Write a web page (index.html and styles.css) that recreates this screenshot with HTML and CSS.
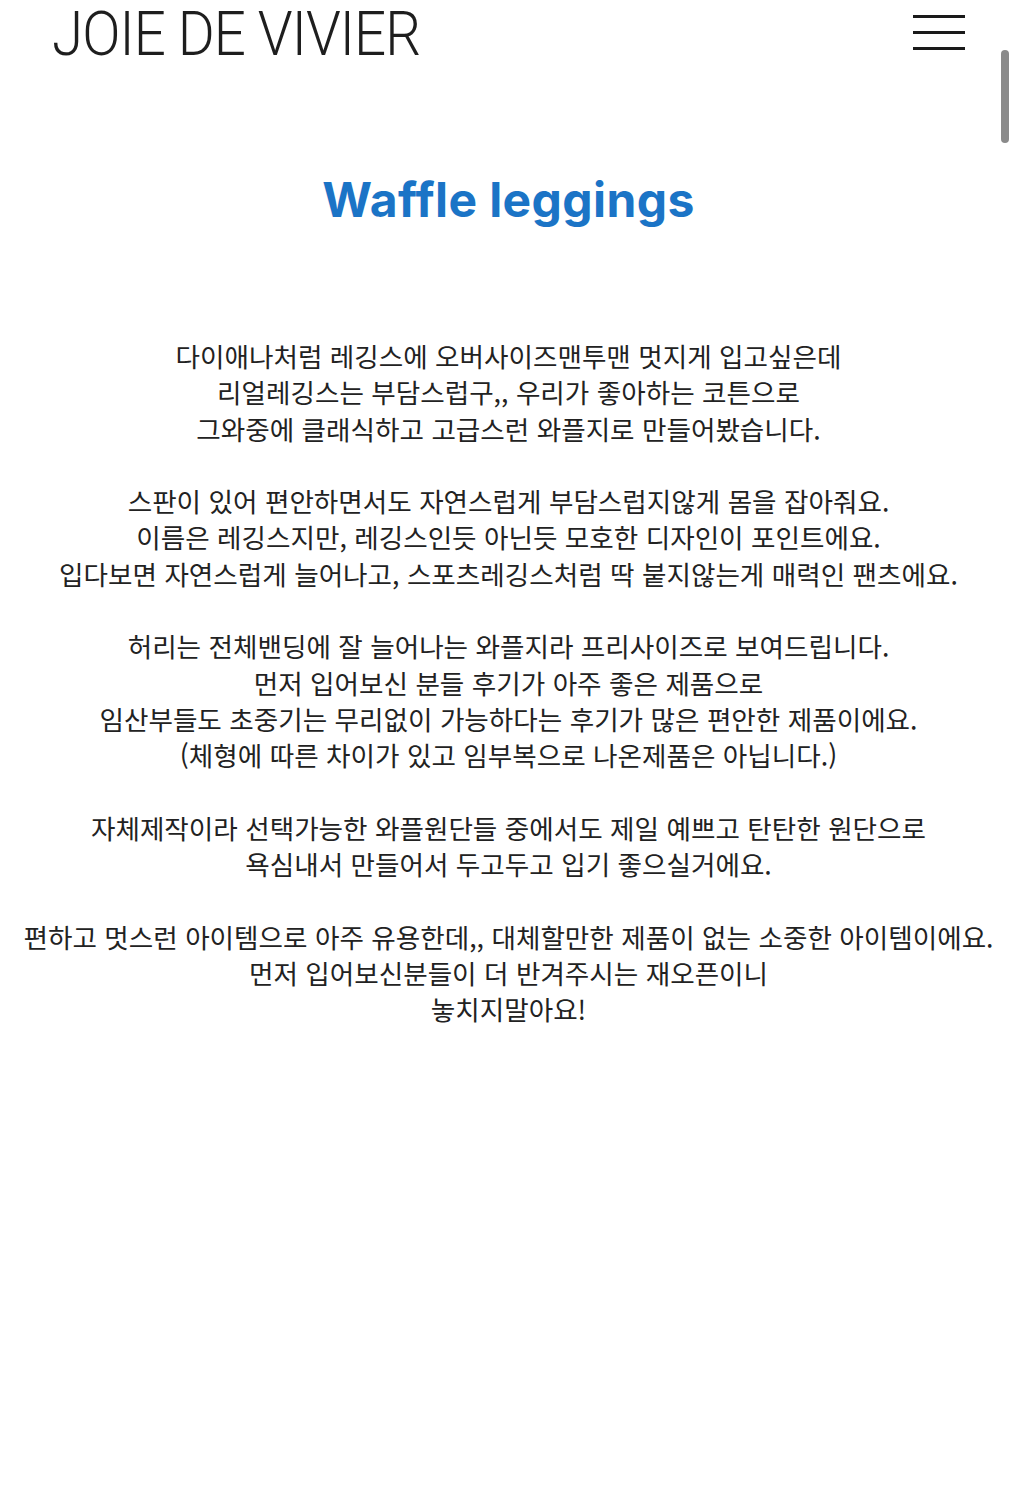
FILE: index.html
```html
<!DOCTYPE html>
<html lang="ko">
<head>
<meta charset="utf-8">
<title>Waffle leggings</title>
<link rel="stylesheet" href="styles.css">
</head>
<body>
<header class="top">
  <div class="logo">JOIE DE VIVIER</div>
  <button class="menu" aria-label="menu">
    <span></span><span></span><span></span>
  </button>
</header>
<div class="scrollbar"></div>
<main class="content">
  <h1 class="title">Waffle leggings</h1>
  <div class="desc">
    <p>다이애나처럼 레깅스에 오버사이즈맨투맨 멋지게 입고싶은데<br>리얼레깅스는 부담스럽구,, 우리가 좋아하는 코튼으로<br>그와중에 클래식하고 고급스런 와플지로 만들어봤습니다.</p>
    <p>스판이 있어 편안하면서도 자연스럽게 부담스럽지않게 몸을 잡아줘요.<br>이름은 레깅스지만, 레깅스인듯 아닌듯 모호한 디자인이 포인트에요.<br>입다보면 자연스럽게 늘어나고, 스포츠레깅스처럼 딱 붙지않는게 매력인 팬츠에요.</p>
    <p>허리는 전체밴딩에 잘 늘어나는 와플지라 프리사이즈로 보여드립니다.<br>먼저 입어보신 분들 후기가 아주 좋은 제품으로<br>임산부들도 초중기는 무리없이 가능하다는 후기가 많은 편안한 제품이에요.<br>(체형에 따른 차이가 있고 임부복으로 나온제품은 아닙니다.)</p>
    <p>자체제작이라 선택가능한 와플원단들 중에서도 제일 예쁘고 탄탄한 원단으로<br>욕심내서 만들어서 두고두고 입기 좋으실거에요.</p>
    <p>편하고 멋스런 아이템으로 아주 유용한데,, 대체할만한 제품이 없는 소중한 아이템이에요.<br>먼저 입어보신분들이 더 반겨주시는 재오픈이니<br>놓치지말아요!</p>
  </div>
</main>
</body>
</html>
```
FILE: styles.css
```css
html, body {
  margin: 0;
  padding: 0;
  background: #ffffff;
}
body {
  font-family: "Noto Sans CJK KR", "Noto Sans", sans-serif;
  color: #222222;
}
.top {
  display: flex;
  justify-content: space-between;
  align-items: flex-start;
  padding: 0 52px 0 52px;
  height: 80px;
}
.logo {
  font-family: "Roboto", sans-serif;
  font-weight: 300;
  font-size: 61px;
  line-height: 68px;
  color: #1e1e1e;
  letter-spacing: -1px;
  transform-origin: left top;
  transform: scaleX(0.926);
  white-space: nowrap;
}
.menu {
  display: flex;
  flex-direction: column;
  gap: 13.5px;
  margin-top: 15px;
  padding: 0;
  border: 0;
  background: none;
}
.menu span {
  display: block;
  width: 52px;
  height: 2.5px;
  background: #1a1a1a;
}
.scrollbar {
  position: absolute;
  left: 1001px;
  top: 50px;
  width: 8px;
  height: 93px;
  border-radius: 4px;
  background: #8a8a8a;
}
.content {
  text-align: center;
}
.title {
  margin: 92px 0 0 0;
  font-family: "Inter", "Roboto", sans-serif;
  font-weight: 700;
  font-size: 48px;
  line-height: 56px;
  color: #1b74c6;
  font-variant-ligatures: none;
  letter-spacing: 0.4px;
}
.desc {
  margin-top: 110px;
  font-size: 26.6px;
  line-height: 36.3px;
  color: #222222;
}
.desc p {
  margin: 0 0 36.3px 0;
}
```
